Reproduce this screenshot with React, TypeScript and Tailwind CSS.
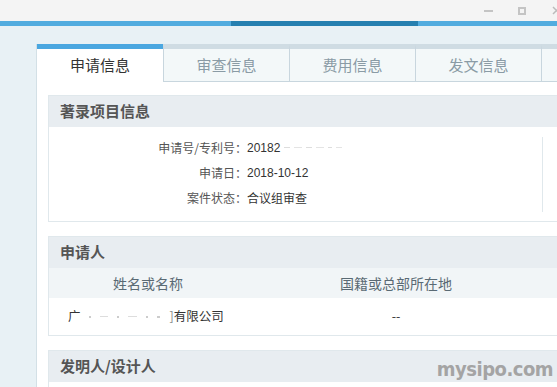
import React from "react";

const font = { fontFamily: '"Noto Sans CJK SC", "Liberation Sans", sans-serif' };

const tabs = ["申请信息", "审查信息", "费用信息", "发文信息", ""];

function SectionHeader({ title }: { title: string }) {
  return (
    <div className="h-[31px] bg-[#e8edf1] pl-[11px] flex items-center text-[15px] font-bold text-[#555]">
      {title}
    </div>
  );
}

export default function App() {
  return (
    <div className="w-[557px] h-[387px] overflow-hidden bg-[#e8f1f5] relative" style={font}>
      {/* window title bar */}
      <div className="h-[21px] bg-[#f4f4f4] flex items-center overflow-hidden">
        <div className="w-[9px] h-[2px] shrink-0 bg-[#c4c4c4] ml-[484px]" />
        <div className="w-[8px] h-[8px] shrink-0 border-2 border-[#c4c4c4] ml-[25px]" />
        <svg className="shrink-0 ml-[26px]" width="9" height="9" viewBox="0 0 9 9">
          <path d="M1 1L8 8M8 1L1 8" stroke="#bbb" strokeWidth="1.5" />
        </svg>
      </div>
      <div className="h-[5px] flex">
        <div className="w-[231px] bg-[#52acdf]" />
        <div className="w-[187px] bg-[#2680b0]" />
        <div className="flex-1 bg-[#52acdf]" />
      </div>

      <div className="pl-[36px] pt-[18px]">
        <div className="bg-white border-l border-[#d3e0e6] h-[400px]">
          {/* tabs */}
          <div className="flex h-[38px]">
            {tabs.map((t, i) =>
              i === 0 ? (
                <div
                  key={i}
                  className="w-[126px] shrink-0 border-t-[5px] border-[#4aa7e0] bg-white flex items-center justify-center text-[15px] text-[#333]"
                >
                  {t}
                </div>
              ) : (
                <div
                  key={i}
                  className="w-[126px] shrink-0 border-t-[5px] border-t-[#cfdce3] border-l border-b border-[#c8d6de] bg-[#f3f8f9] flex items-center justify-center text-[15px] text-[#8a9ba5]"
                >
                  {t}
                </div>
              )
            )}
          </div>

          <div className="pl-[11px] pt-[13px] flex flex-col gap-[14px]">
            {/* 著录项目信息 */}
            <div className="border border-[#e0e8ec] border-r-0">
              <SectionHeader title="著录项目信息" />
              <div className="h-[94px] flex">
                <div className="w-[493px] flex flex-col pt-[10px] gap-[4px] text-[12px]">
                  <div className="flex h-[21px] items-center">
                    <span className="w-[198px] text-right text-[#555]">申请号/专利号：</span>
                    <span className="text-[#333]" style={{ fontFamily: '"Liberation Sans", sans-serif' }}>
                      20182
                    </span>
                    <span className="flex items-center gap-[4px] ml-[4px]">
                      <span className="w-[6px] h-[1px] bg-[#ddd]" />
                      <span className="w-[8px] h-[1px] bg-[#e4e4e4]" />
                      <span className="w-[6px] h-[1px] bg-[#ddd]" />
                      <span className="w-[8px] h-[1px] bg-[#e4e4e4]" />
                      <span className="w-[4px] h-[1px] bg-[#ddd]" />
                      <span className="w-[6px] h-[1px] bg-[#e4e4e4]" />
                    </span>
                  </div>
                  <div className="flex h-[21px] items-center">
                    <span className="w-[198px] text-right text-[#555]">申请日：</span>
                    <span className="text-[#333]" style={{ fontFamily: '"Liberation Sans", sans-serif' }}>
                      2018-10-12
                    </span>
                  </div>
                  <div className="flex h-[21px] items-center">
                    <span className="w-[198px] text-right text-[#555]">案件状态：</span>
                    <span className="text-[#333]">合议组审查</span>
                  </div>
                </div>
                <div className="mt-[10px] h-[75px] border-l border-[#e0e8ec]" />
              </div>
            </div>

            {/* 申请人 */}
            <div className="border border-[#e0e8ec] border-r-0">
              <SectionHeader title="申请人" />
              <div className="h-[30px] bg-[#f1f5f7] flex items-center text-[14px] text-[#5a6a74]">
                <div className="w-[198px] text-center">姓名或名称</div>
                <div className="w-[298px] text-center">国籍或总部所在地</div>
              </div>
              <div className="h-[37px] flex items-center text-[12.5px] text-[#333]">
                <div className="w-[198px] pl-[19px] whitespace-nowrap flex items-center">
                  <span>广</span>
                  <span className="w-[89px] shrink-0 flex items-center gap-[9px] pl-[8px]">
                    <span className="w-[2px] h-[2px] bg-[#ccc]" />
                    <span className="w-[8px] h-[1px] bg-[#ddd]" />
                    <span className="w-[2px] h-[2px] bg-[#ccc]" />
                    <span className="w-[9px] h-[1px] bg-[#ddd]" />
                    <span className="w-[2px] h-[2px] bg-[#ccc]" />
                    <span className="w-[3px] h-[2px] bg-[#ccc]" />
                  </span>
                  <span className="text-[#888]">]</span>
                  <span>有限公司</span>
                </div>
                <div className="w-[298px] text-center">--</div>
              </div>
            </div>

            {/* 发明人/设计人 */}
            <div className="border border-[#e0e8ec] border-r-0">
              <SectionHeader title="发明人/设计人" />
              <div className="h-[40px]" />
            </div>
          </div>
        </div>
      </div>

      <div
        className="absolute right-[4px] bottom-[3px] text-[20px] font-bold text-[#a4a4a4] tracking-[-0.5px]"
        style={{ fontFamily: '"DejaVu Sans Condensed", "Liberation Sans Narrow", sans-serif' }}
      >
        mysipo.com
      </div>
    </div>
  );
}
